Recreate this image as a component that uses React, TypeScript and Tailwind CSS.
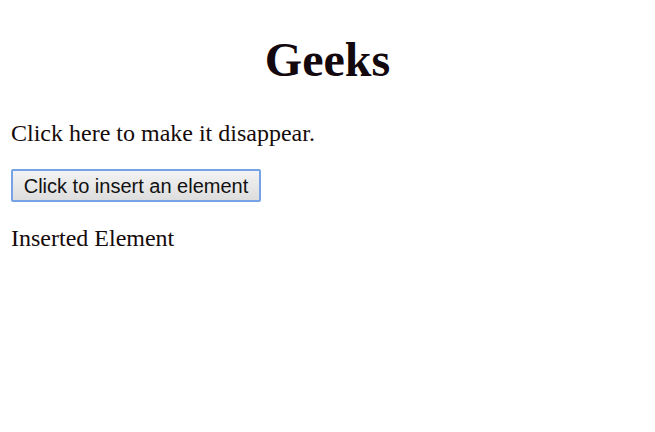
export default function App() {
  return (
    <div className="min-h-screen bg-white px-[11px] font-['Liberation_Serif',serif] text-black">
      <h1 className="pt-8 text-center text-[48px] font-bold leading-[55px] text-[#12080d]">
        Geeks
      </h1>
      <p className="mt-8 text-[24px] leading-[28px] text-[#160b0b]">
        Click here to make it disappear.
      </p>
      <div className="mt-[22px]">
        <button className="h-[33px] w-[250px] rounded-[2px] border-2 border-[#76a3e6] bg-gradient-to-b from-[#f3f3f3] to-[#dddddd] font-['Liberation_Sans',Arial,sans-serif] text-[20px] leading-[24px] text-[#111]">
          Click to insert an element
        </button>
      </div>
      <p className="mt-[22px] text-[24px] leading-[28px] text-[#160b0b]">
        Inserted Element
      </p>
    </div>
  );
}
